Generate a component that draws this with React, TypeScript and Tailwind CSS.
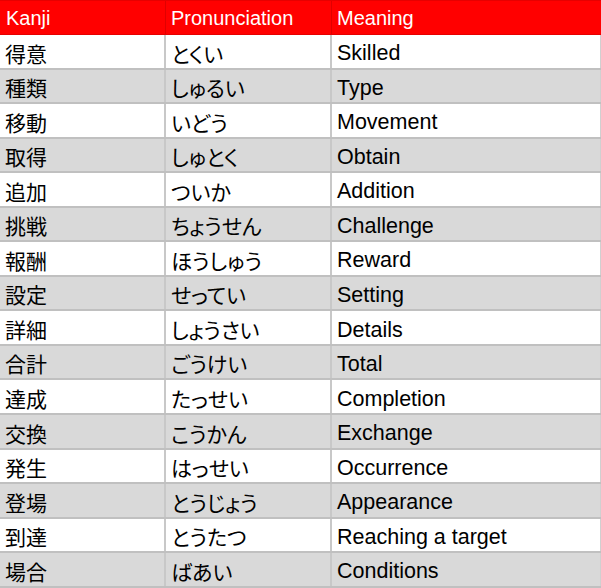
import React from "react";

interface Word {
    kanji: string;
    kana: string;
    meaning: string;
}

const words: Word[] = [
    {kanji: "得意", kana: "とくい", meaning: "Skilled"},
    {kanji: "種類", kana: "しゅるい", meaning: "Type"},
    {kanji: "移動", kana: "いどう", meaning: "Movement"},
    {kanji: "取得", kana: "しゅとく", meaning: "Obtain"},
    {kanji: "追加", kana: "ついか", meaning: "Addition"},
    {kanji: "挑戦", kana: "ちょうせん", meaning: "Challenge"},
    {kanji: "報酬", kana: "ほうしゅう", meaning: "Reward"},
    {kanji: "設定", kana: "せってい", meaning: "Setting"},
    {kanji: "詳細", kana: "しょうさい", meaning: "Details"},
    {kanji: "合計", kana: "ごうけい", meaning: "Total"},
    {kanji: "達成", kana: "たっせい", meaning: "Completion"},
    {kanji: "交換", kana: "こうかん", meaning: "Exchange"},
    {kanji: "発生", kana: "はっせい", meaning: "Occurrence"},
    {kanji: "登場", kana: "とうじょう", meaning: "Appearance"},
    {kanji: "到達", kana: "とうたつ", meaning: "Reaching a target"},
    {kanji: "場合", kana: "ばあい", meaning: "Conditions"},
];

const jp = "font-['Liberation_Sans','Noto_Sans_CJK_JP',sans-serif]";

export default function App() {
    return (
        <div className={`w-[601px] h-[588px] overflow-hidden bg-white text-black ${jp}`}>
            {/*Header*/}
            <div className="flex h-[35px] bg-[#ff0000] border-t border-b border-[#e60000] text-white text-[20px]">
                <div className="w-[166px] flex items-center pl-[6px] border-r border-[#e00000]">Kanji</div>
                <div className="w-[166px] flex items-center pl-[5px] border-r border-[#e00000]">Pronunciation</div>
                <div className="flex-1 flex items-center pl-[5px]">Meaning</div>
            </div>

            {words.map((w, i) => (
                <div
                    key={w.kanji}
                    className={`flex h-[34.56px] border-b-2 border-[#c0c0c0] ${i % 2 === 1 ? "bg-[#d9d9d9]" : "bg-white"}`}
                >
                    <div className="w-[166px] flex items-center pl-[5px] pt-[6px] border-r-2 border-[#c8c8c8] text-[21px] [font-feature-settings:'palt']">
                        {w.kanji}
                    </div>
                    <div className="w-[166px] flex items-center pl-[5px] pt-[6px] border-r-2 border-[#c8c8c8] text-[21px] [font-feature-settings:'palt']">
                        {w.kana}
                    </div>
                    <div className="flex-1 flex items-center pl-[5px] pt-[4px] border-r border-[#d0d0d0] text-[21.5px]">
                        {w.meaning}
                    </div>
                </div>
            ))}
        </div>
    );
}
